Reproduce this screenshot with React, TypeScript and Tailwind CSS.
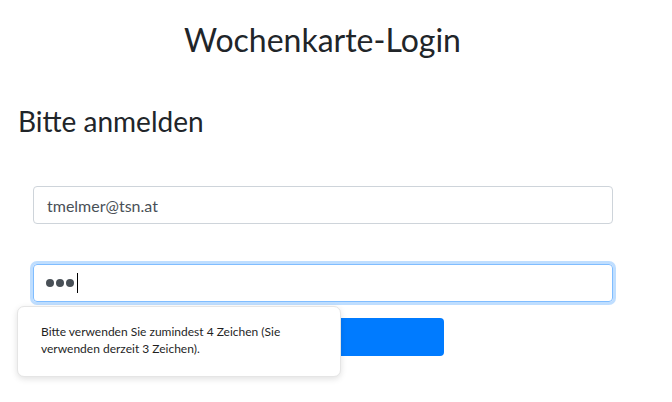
import React from 'react';

export default function App() {
  return (
    <div className="w-[672px] h-[402px] bg-white relative overflow-hidden font-['Lato','Noto_Sans',sans-serif] text-[#212529]">
      <h1 className="text-center text-[32px] leading-none pt-[24px] pr-[27px] font-normal">Wochenkarte-Login</h1>

      <div className="pl-[18px] pt-[51px]">
        <h2 className="text-[28px] leading-none font-normal">Bitte anmelden</h2>
      </div>

      <form className="pl-[33px] pr-[59px] pt-[51px] flex flex-col">
        <input
          type="email"
          defaultValue="tmelmer@tsn.at"
          className="h-[38px] w-full border border-[#ced4da] rounded-[4px] px-[13px] text-[16px] text-[#495057] outline-none"
        />
        <div className="mt-[40px] h-[38px] w-full border border-[#80bdff] rounded-[4px] shadow-[0_0_0_3px_rgba(0,123,255,0.25)] px-[12px] flex items-center gap-[2px]">
          <span className="w-[8px] h-[8px] rounded-full bg-[#495057]" />
          <span className="w-[8px] h-[8px] rounded-full bg-[#495057]" />
          <span className="w-[8px] h-[8px] rounded-full bg-[#495057]" />
          <span className="ml-[1px] w-px h-[20px] bg-black" />
        </div>
        <button type="button" className="mt-[16px] h-[38px] w-[411px] bg-[#007bff] rounded-[4px]" />
      </form>

      <div className="absolute left-[17px] top-[306px] w-[324px] h-[71px] bg-white rounded-[7px] border border-[#e5e5e5] shadow-[0_2px_6px_rgba(0,0,0,0.12)] pl-[23px] pt-[16px] text-[12px] leading-[17px] text-[#1f1f1f]">
        Bitte verwenden Sie zumindest 4 Zeichen (Sie
        <br />
        verwenden derzeit 3 Zeichen).
      </div>
    </div>
  );
}
